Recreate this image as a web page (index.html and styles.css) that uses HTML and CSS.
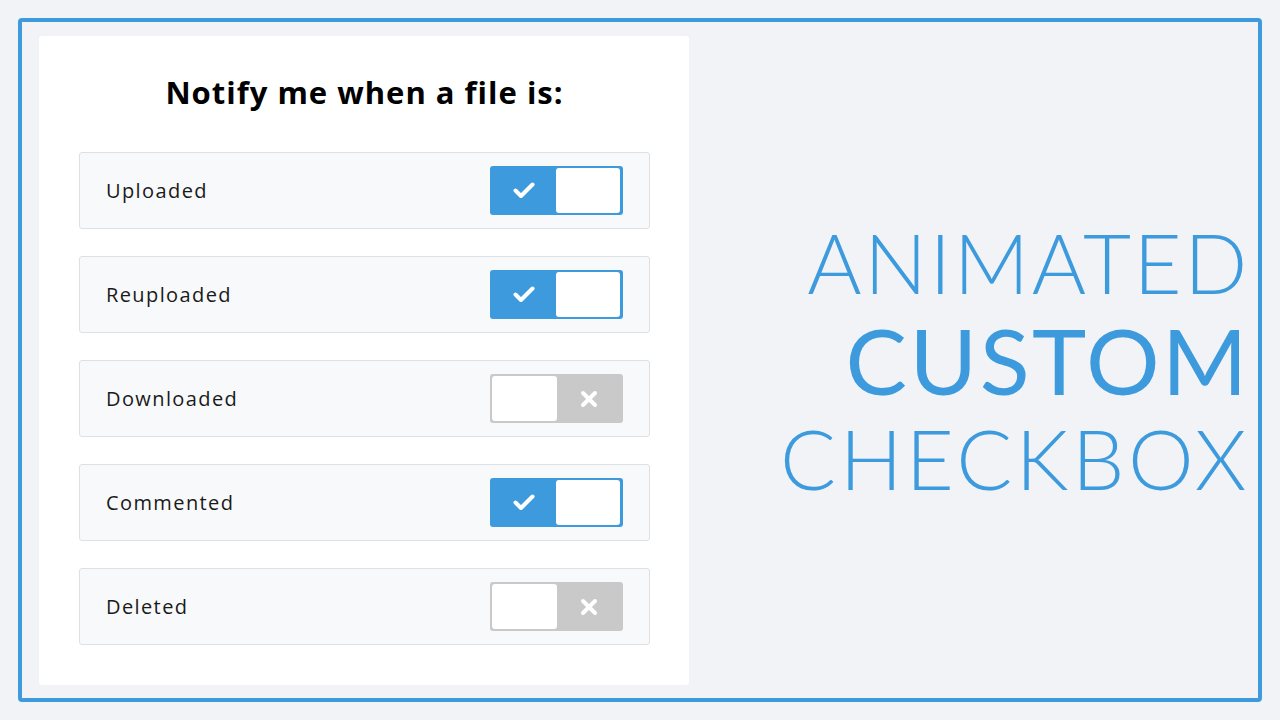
FILE: index.html
```html
<!DOCTYPE html>
<html lang="en">
<head>
<meta charset="utf-8">
<title>Animated Custom Checkbox</title>
<link rel="stylesheet" href="styles.css">
</head>
<body>
<div class="frame">
  <div class="card">
    <h1 class="title">Notify me when a file is:</h1>
    <div class="list">
      <div class="row">
        <span class="label">Uploaded</span>
        <div class="toggle on">
          <span class="icon"><svg width="22" height="17" viewBox="0 0 22 17"><path d="M2.5 8.5 L8 14 L19.5 2.5" fill="none" stroke="#fff" stroke-width="4" stroke-linecap="round" stroke-linejoin="round"/></svg></span>
          <span class="knob"></span>
        </div>
      </div>
      <div class="row">
        <span class="label">Reuploaded</span>
        <div class="toggle on">
          <span class="icon"><svg width="22" height="17" viewBox="0 0 22 17"><path d="M2.5 8.5 L8 14 L19.5 2.5" fill="none" stroke="#fff" stroke-width="4" stroke-linecap="round" stroke-linejoin="round"/></svg></span>
          <span class="knob"></span>
        </div>
      </div>
      <div class="row">
        <span class="label">Downloaded</span>
        <div class="toggle off">
          <span class="knob"></span>
          <span class="icon"><svg width="18" height="18" viewBox="0 0 18 18"><path d="M3 3 L15 15 M15 3 L3 15" fill="none" stroke="#fff" stroke-width="4" stroke-linecap="round"/></svg></span>
        </div>
      </div>
      <div class="row">
        <span class="label">Commented</span>
        <div class="toggle on">
          <span class="icon"><svg width="22" height="17" viewBox="0 0 22 17"><path d="M2.5 8.5 L8 14 L19.5 2.5" fill="none" stroke="#fff" stroke-width="4" stroke-linecap="round" stroke-linejoin="round"/></svg></span>
          <span class="knob"></span>
        </div>
      </div>
      <div class="row">
        <span class="label">Deleted</span>
        <div class="toggle off">
          <span class="knob"></span>
          <span class="icon"><svg width="18" height="18" viewBox="0 0 18 18"><path d="M3 3 L15 15 M15 3 L3 15" fill="none" stroke="#fff" stroke-width="4" stroke-linecap="round"/></svg></span>
        </div>
      </div>
    </div>
  </div>
  <div class="hero">
    <div class="line thin a">ANIMATED</div>
    <div class="line bold">CUSTOM</div>
    <div class="line thin c">CHECKBOX</div>
  </div>
</div>
</body>
</html>
```

FILE: styles.css
```css
* { box-sizing: border-box; }
html, body { margin: 0; padding: 0; }
body {
  background: #f1f3f7;
  font-family: "Open Sans", "DejaVu Sans", sans-serif;
  width: 1280px;
  height: 720px;
  overflow: hidden;
}
.frame {
  margin: 18px;
  height: 684px;
  border: 4px solid #3d9bdd;
  border-radius: 4px;
  display: flex;
  padding: 14px 8px 13px 17px;
}
.card {
  width: 650px;
  height: 649px;
  background: #fff;
  border-radius: 3px;
  padding: 0 39px 0 40px;
}
.title {
  margin: 38px 0 0;
  height: 78px;
  text-align: center;
  font-family: "Open Sans", sans-serif;
  font-weight: 700;
  font-size: 31px;
  letter-spacing: 1px;
  line-height: 36px;
  color: #000;
}
.list {
  display: flex;
  flex-direction: column;
  gap: 27px;
}
.row {
  height: 77px;
  background: #f8f9fb;
  border: 1px solid #dde0e4;
  border-radius: 3px;
  display: flex;
  align-items: center;
  justify-content: space-between;
  padding: 0 26px 0 26px;
}
.label {
  font-size: 20px;
  color: #1a1a1a;
  letter-spacing: 1.4px;
}
.toggle {
  width: 133px;
  height: 49px;
  border-radius: 3px;
  display: flex;
  align-items: stretch;
}
.toggle.on { background: #3d9bdd; padding: 2px 3px 2px 2px; }
.toggle.off { background: #c9c9c9; padding: 2px; }
.knob {
  width: 64px;
  background: #fff;
  border-radius: 3px;
}
.toggle.off .knob { width: 65px; }
.icon {
  flex: 1;
  display: flex;
  align-items: center;
  justify-content: center;
}
.icon svg { display: block; }
.hero {
  flex: 1;
  display: flex;
  flex-direction: column;
  align-items: flex-end;
  justify-content: center;
  color: #3d9bdd;
  font-family: "Lato", sans-serif;
  padding-bottom: 2px;
}
.line {
  line-height: 98px;
  white-space: nowrap;
}
.line.thin {
  font-weight: 300;
  font-size: 83px;
}
.line.a { letter-spacing: 2.6px; }
.line.c { letter-spacing: 3.5px; }
.line.bold {
  font-weight: 400;
  font-size: 92px;
  letter-spacing: 2.5px;
}
```
